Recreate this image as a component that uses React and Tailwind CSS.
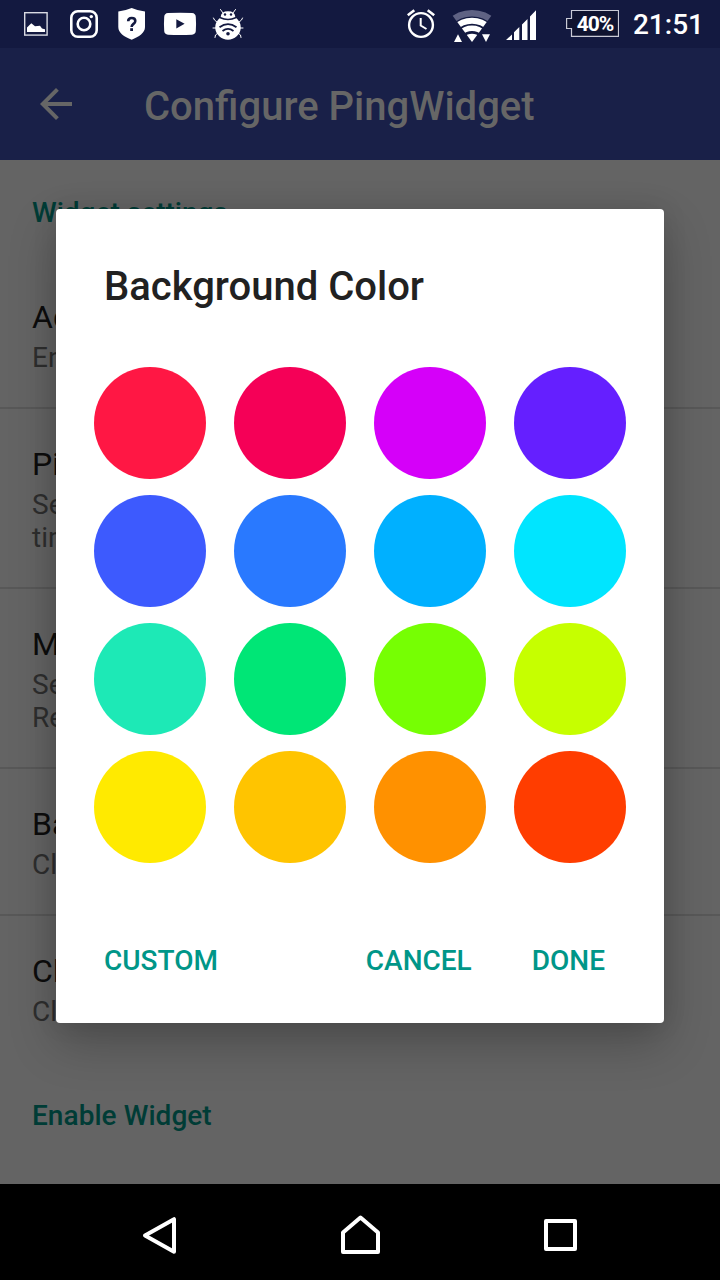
const swatches = [
  'bg-[#ff1744]', 'bg-[#f50057]', 'bg-[#d500f9]', 'bg-[#651fff]',
  'bg-[#3d5afe]', 'bg-[#2979ff]', 'bg-[#00b0ff]', 'bg-[#00e5ff]',
  'bg-[#1de9b6]', 'bg-[#00e676]', 'bg-[#76ff03]', 'bg-[#c6ff00]',
  'bg-[#ffea00]', 'bg-[#ffc400]', 'bg-[#ff9100]', 'bg-[#ff3d00]',
];

const settings = [
  { title: 'Ad', lines: ['Enter'] },
  { title: 'Ping', lines: ['Set', 'time'] },
  { title: 'Max', lines: ['Set', 'Req'] },
  { title: 'Back', lines: ['Click'] },
  { title: 'Click', lines: ['Click'] },
];

function NotificationIcons() {
  return (
    <svg className="h-12 w-[260px]" viewBox="0 0 260 48" fill="none">
      {/* picture */}
      <rect x="24.700" y="12.700" width="22.400" height="22.400" stroke="#d9dae3" strokeWidth="1.400" />
      <path d="M27 32V27.500L31.300 23.200L35 26.300L40 25.800L42 28.500L45 29.300V32Z" fill="#fff" />
      {/* camera */}
      <rect x="71.300" y="11.300" width="25.400" height="25.400" rx="6.500" stroke="#fff" strokeWidth="2.600" />
      <circle cx="84" cy="24" r="6.300" stroke="#fff" strokeWidth="2.600" />
      <circle cx="91.300" cy="16.600" r="1.700" fill="#fff" />
      {/* shield */}
      <path d="M118.300 11.500Q125 10.800 131.700 8Q138 10.800 145 11.500V27C145 33 139 36.500 131.700 39.800C124 36.500 118.300 33 118.300 27Z" fill="#fff" />
      <path d="M128.200 21.200C128.200 16.800 135.300 17 135.300 21C135.300 24 131.600 23.800 131.600 27" stroke="#131940" strokeWidth="2.600" />
      <rect x="130.200" y="28.200" width="2.800" height="2.800" fill="#131940" />
      {/* video */}
      <path d="M168 13Q180 12.400 192 13Q195.600 13.300 195.800 17Q196.300 24 195.800 31Q195.600 34.400 192 34.700Q180 35.300 168 34.700Q164.400 34.400 164.200 31Q163.700 24 164.200 17Q164.400 13.300 168 13Z" fill="#fff" />
      <path d="M176.300 19.300L184.600 23.800L176.300 28.400Z" fill="#131940" />
      {/* bug */}
      <path d="M223 13L220.500 9.500M233 13L235.500 9.500M217.500 22.500L214.500 20L213.500 18M238.500 22.500L241.500 20L242.500 18M216 28H213M240 28H243M218 33L215.500 35L215 37.500M238 33L240.500 35L241 37.500" stroke="#fff" strokeWidth="1" strokeLinecap="round" />
      <path d="M220.700 17Q221 11.300 228 11.300Q235 11.300 235.300 17Q228 20.500 220.700 17Z" fill="#fff" />
      <circle cx="225" cy="14.500" r="1.200" fill="#131940" />
      <circle cx="231" cy="14.500" r="1.200" fill="#131940" />
      <path d="M219.500 18.300Q228 22 236.500 18.300Q241 22.500 240.800 28C240.500 34.500 234.500 39.700 228 39.700C221.500 39.700 215.500 34.500 215.200 28Q215 22.500 219.500 18.300Z" fill="#fff" />
      <path d="M219.500 27.300Q228 21 236.500 27.300M222.500 31Q228 26.800 233.500 31" stroke="#131940" strokeWidth="1.800" />
      <circle cx="228" cy="33.700" r="1.800" fill="#131940" />
    </svg>
  );
}

function SystemIcons() {
  return (
    <svg className="h-12 w-[150px]" viewBox="400 0 150 48" fill="none">
      {/* alarm */}
      <circle cx="421" cy="25" r="11.900" stroke="#fff" strokeWidth="2.400" />
      <path d="M420.700 18V25.500L426.500 29" stroke="#fff" strokeWidth="2" />
      <path d="M407.800 15.300L414.300 10.200M434.200 15.300L427.700 10.200" stroke="#fff" strokeWidth="2.600" />
      {/* wifi */}
      <clipPath id="fan">
        <path d="M472 42L444.700 5H499.300Z" />
      </clipPath>
      <g clipPath="url(#fan)">
        <circle cx="472" cy="45" r="31.800" stroke="#5f6283" strokeWidth="6.400" />
        <circle cx="472" cy="45" r="24.300" stroke="#fff" strokeWidth="6" />
        <circle cx="472" cy="45" r="16.700" stroke="#fff" strokeWidth="5.600" />
        <circle cx="472" cy="45" r="11.200" fill="#fff" />
      </g>
      <path d="M454 42L458 34.300L462 42ZM482 34.300H490L486 42Z" fill="#fff" />
      {/* signal */}
      <path d="M506 40L512 34.400V40ZM514 40V32.300L519.300 27V40ZM522 40V24.500L527.500 19V40ZM530 40V16.500L536 10.300V40Z" fill="#fff" />
    </svg>
  );
}

function StatusBar() {
  return (
    <div className="flex h-12 items-center bg-[#131940] text-white">
      <NotificationIcons />
      <div className="ml-auto flex items-center">
        <SystemIcons />
        <div className="relative ml-4 mr-[14px] flex h-12 w-[53px] items-center justify-center">
          <svg className="absolute inset-0" width="53" height="48" viewBox="566 0 53 48" fill="none">
            <path d="M571.500 10.500H618.500V36.300H571.500V28.500H566.600V18.500H571.500Z" fill="#0f1330" stroke="#c9cad6" strokeWidth="1.200" />
          </svg>
          <span className="relative pl-[5px] text-[21px] font-bold leading-none tracking-[-1px]">40%</span>
        </div>
        <span className="mr-4 pt-[2px] text-[28px] font-medium leading-none">21:51</span>
      </div>
    </div>
  );
}

function Toolbar() {
  return (
    <header className="flex h-28 items-center bg-[#192048] text-[#666666]">
      <svg className="ml-8 h-12 w-12" viewBox="0 0 24 24" fill="currentColor">
        <path d="M20 11H7.830l5.590-5.590L12 4l-8 8 8 8 1.410-1.410L7.830 13H20v-2z" />
      </svg>
      <h1 className="ml-16 pt-[5px] text-[40px] font-medium leading-[47px]">Configure PingWidget</h1>
    </header>
  );
}

function SettingRow({ title, lines, last }) {
  return (
    <div className={last ? 'px-8 pb-[35px] pt-9' : 'border-b-2 border-[#585858] px-8 pb-[33px] pt-9'}>
      <div className="text-[32px] leading-[38px] text-[#0d0d0d]">{title}</div>
      <div className="mt-[5px] text-[28px] leading-[33px] text-[#2e2e2e]">
        {lines.map((line) => (
          <div key={line}>{line}</div>
        ))}
      </div>
    </div>
  );
}

function ColorDialog() {
  return (
    <div
      role="dialog"
      className="absolute left-14 top-[209px] flex h-[814px] w-[608px] flex-col rounded-[4px] bg-white shadow-[0_20px_48px_rgba(0,0,0,0.24),0_0_24px_rgba(0,0,0,0.1)]"
    >
      <h2 className="px-12 pt-[54px] text-[40px] font-medium leading-[47px] text-[#212121]">Background Color</h2>
      <div className="mt-[57px] grid grid-cols-[repeat(4,112px)] gap-x-7 gap-y-4 pl-[38px]">
        {swatches.map((color) => (
          <button key={color} className={`size-28 rounded-full ${color}`} />
        ))}
      </div>
      <div className="mt-[81px] flex px-12 text-[28px] font-medium leading-[33px] text-[#009688]">
        <button>CUSTOM</button>
        <button className="ml-auto">CANCEL</button>
        <button className="ml-[60px] mr-[11px]">DONE</button>
      </div>
    </div>
  );
}

function NavigationBar() {
  return (
    <nav className="flex h-24 items-center justify-center gap-[152px] bg-black text-white">
      <svg className="size-12" viewBox="0 0 48 48" fill="none" stroke="currentColor" strokeWidth="4" strokeLinejoin="round">
        <path d="M38 11.200V43.800L9 27.500Z" />
      </svg>
      <svg className="size-12" viewBox="0 0 48 48" fill="none" stroke="currentColor" strokeWidth="4" strokeLinejoin="round">
        <path d="M7 24.500L24.500 9.500L42 24.500V44H7Z" />
      </svg>
      <svg className="size-12" viewBox="0 0 48 48" fill="none" stroke="currentColor" strokeWidth="4" strokeLinejoin="round">
        <rect x="10" y="13" width="29" height="28" />
      </svg>
    </nav>
  );
}

export default function App() {
  return (
    <div className="relative flex h-[1280px] w-[720px] flex-col overflow-hidden font-['Roboto',sans-serif]">
      <StatusBar />
      <Toolbar />
      <main className="flex-1 bg-[#646464]">
        <h3 className="h-[102px] px-8 pt-9 text-[28px] font-medium leading-[33px] text-[#003c36]">Widget settings</h3>
        {settings.map((item, i) => (
          <SettingRow key={i} {...item} last={i === settings.length - 1} />
        ))}
        <h3 className="px-8 pt-9 text-[28px] font-medium leading-[33px] tracking-[0.05px] text-[#003c36]">Enable Widget</h3>
      </main>
      <NavigationBar />
      <ColorDialog />
    </div>
  );
}
